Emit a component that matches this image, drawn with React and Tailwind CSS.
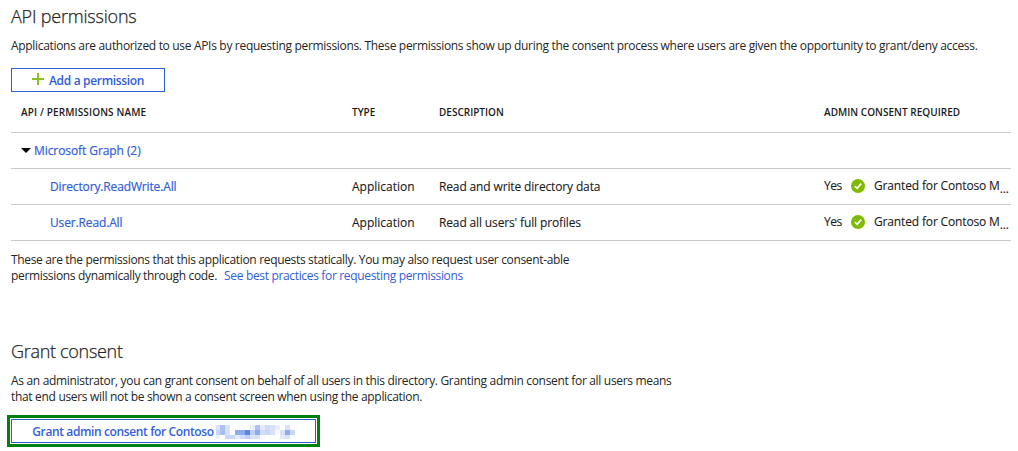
const permissions = [
  { name: "Directory.ReadWrite.All", type: "Application", description: "Read and write directory data" },
  { name: "User.Read.All", type: "Application", description: "Read all users' full profiles" },
];

// Obscured tenant name, one array per row of cells
const mosaic = [
  ["#d9e2fa", "#adc2f2", "#d9e2fa", "#ffffff", "#f9faff", "#f9faff", "#ffffff", "#e9effd", "#adc2f2", "#e1e9fb", "#d0dcf8", "#d9e2fa", "#e9effd", "#fcfdff", "#d9e2fa", "#fcfdff"],
  ["#c9d7f7", "#a5bcf0", "#d9e2fa", "#ffffff", "#90abeb", "#90abeb", "#5b84e5", "#c0d0f5", "#8faaec", "#d0dcf8", "#c9d7f7", "#d9e2fa", "#f9faff", "#d9e2fa", "#8faaec", "#c9d7f7"],
  ["#e9effd", "#ffffff", "#c9d7f7", "#c9d7f7", "#e1e9fb", "#d0dcf8", "#c0d0f5", "#d9e2fa", "#d9e2fa", "#f9faff", "#ffffff", "#ffffff", "#ffffff", "#e1e9fb", "#d9e2fa", "#f9faff"],
];

function Mosaic() {
  return (
    <svg className="ml-[2px] mt-[2px] h-[14px] w-[79px] shrink-0" viewBox="1 0 79 14" shapeRendering="crispEdges">
      {mosaic.map((row, y) => row.map((fill, x) => <rect key={`${x}-${y}`} x={x * 5} y={y * 5} width="5" height="5" fill={fill} />))}
    </svg>
  );
}

function Granted() {
  return (
    <div className="flex h-[35px] items-center pb-[1px]">
      <span className="w-[27px] tracking-[-0.5px]">Yes</span>
      <svg className="h-[14px] w-[14px] shrink-0" viewBox="0 0 14 14">
        <circle cx="7" cy="7" r="7" fill="#7fba00" />
        <path d="M3.8 7.1 6.2 9.3 10.2 4.7" fill="none" stroke="#fff" strokeWidth="1.8" />
      </svg>
      <span className="ml-[9px] whitespace-nowrap tracking-[-0.15px]">Granted for Contoso M</span>
      <span className="pt-[5px]">...</span>
    </div>
  );
}

export default function App() {
  return (
    <main className="h-[451px] w-[1018px] overflow-hidden bg-white pl-[11px] pr-[7px] font-['Open_Sans','Noto_Sans',sans-serif] text-[12px] leading-4 text-[#252525]">
      <h1 className="h-[38px] pt-[4px] text-[18px] font-light leading-6 tracking-[-0.2px] [-webkit-text-stroke:0.25px]">API permissions</h1>
      <p className="h-[30px] whitespace-nowrap tracking-[-0.318px]">Applications are authorized to use APIs by requesting permissions. These permissions show up during the consent process where users are given the opportunity to grant/deny access.</p>
      <button className="flex h-[24px] w-[154px] items-center border border-[#2a5fd0] pl-[20px] font-semibold text-[#3260d8]">
        <svg className="mb-[3px] mr-[5px] h-[12px] w-[12px]" viewBox="0 0 12 12"><path d="M6 0V12M0 6H12" stroke="#8cbf26" strokeWidth="2" /></svg>
        <span className="pt-[2px] tracking-[-0.33px]">Add a permission</span>
      </button>
      <section className="w-[1000px]">
        <div className="grid h-[41px] grid-cols-[331px_87px_385px_187px] items-center border-b border-[#c8c8c8] pl-[10px] text-[10px] font-semibold text-[#1b1b1b]">
          <span className="tracking-[0.13px]">API / PERMISSIONS NAME</span><span>TYPE</span><span>DESCRIPTION</span><span className="tracking-[0.03px]">ADMIN CONSENT REQUIRED</span>
        </div>
        <div className="flex h-[36px] items-center border-b border-[#c8c8c8] pl-[10px] text-[#3260d8]">
          <svg className="mr-[3px] h-[5px] w-[10px]" viewBox="0 0 10 5"><path d="M0 0H10L5 5Z" fill="#000" /></svg>
          <span className="tracking-[-0.08px] [-webkit-text-stroke:0.2px]">Microsoft Graph (2)</span>
        </div>
        {permissions.map((p) => (
          <div key={p.name} className="grid h-[36px] grid-cols-[331px_87px_385px_187px] items-center border-b border-[#c8c8c8] pl-[10px] tracking-[-0.14px] text-[#1b1b1b] [-webkit-text-stroke:0.1px]">
            <span className="pl-[29px] text-[#3260d8] [-webkit-text-stroke:0.2px]">{p.name}</span><span className="tracking-normal">{p.type}</span><span>{p.description}</span><Granted />
          </div>
        ))}
      </section>
      <p className="h-[98px] whitespace-nowrap pt-[11px] tracking-[-0.335px]">
        These are the permissions that this application requests statically. You may also request user consent-able<br />
        permissions dynamically through code.<a className="ml-[7px] text-[#3260d8]">See best practices for requesting permissions</a>
      </p>
      <h2 className="h-[34px] text-[18px] font-light leading-6 tracking-[-0.3px] [-webkit-text-stroke:0.25px]">Grant consent</h2>
      <p className="h-[42px] whitespace-nowrap tracking-[-0.318px]">As an administrator, you can grant consent on behalf of all users in this directory. Granting admin consent for all users means<br />that end users will not be shown a consent screen when using the application.</p>
      <div className="-ml-[4px] h-[32px] w-[313px] border-[3px] border-[#00800f] p-[1px]">
        <button className="flex h-[24px] w-[305px] items-center border border-[#2a5fd0] pl-[20px] font-semibold text-[#3260d8]">
          <span className="w-[182px] whitespace-nowrap pt-[2px] tracking-[-0.38px]">Grant admin consent for Contoso</span><Mosaic />
        </button>
      </div>
    </main>
  );
}
